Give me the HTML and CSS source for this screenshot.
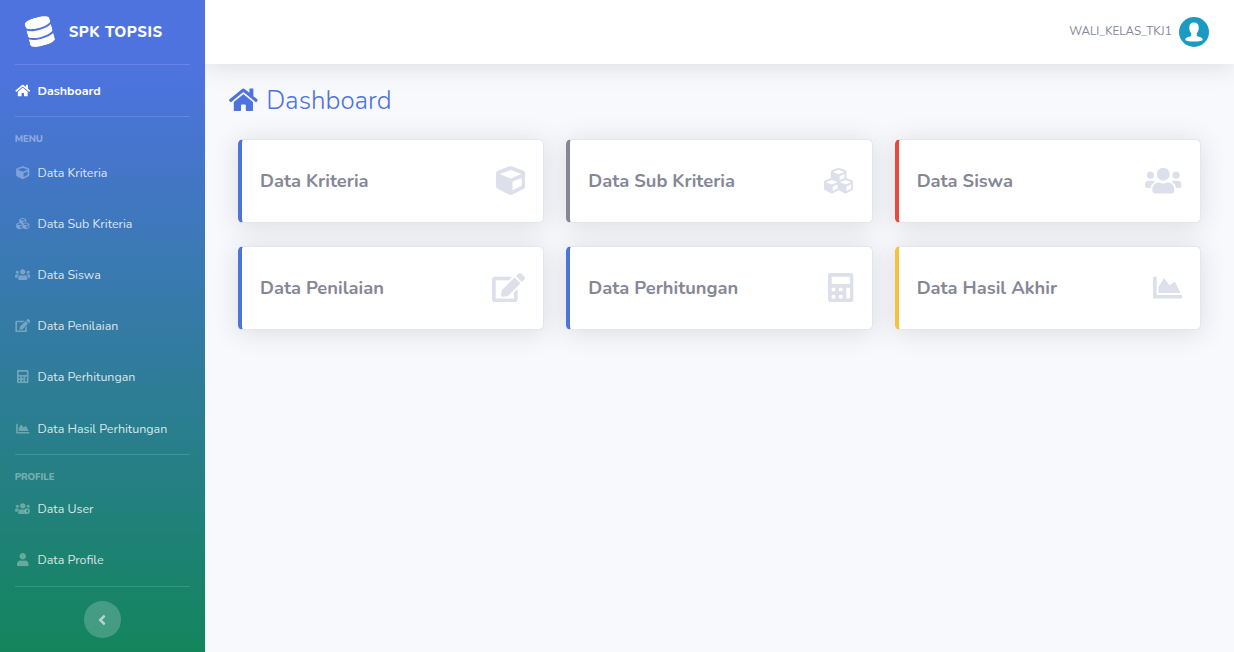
FILE: index.html
```html
<!DOCTYPE html>
<html lang="id">
<head>
<meta charset="utf-8">
<title>SPK TOPSIS - Dashboard</title>
<link rel="stylesheet" href="styles.css">
</head>
<body>
<svg class="sprite" aria-hidden="true">
  <symbol id="home" viewBox="0 0 576 512"><path d="M280.37 148.26L96 300.11V464a16 16 0 0 0 16 16l112.06-.29a16 16 0 0 0 15.92-16V368a16 16 0 0 1 16-16h64a16 16 0 0 1 16 16v95.64a16 16 0 0 0 16 16.05L464 480a16 16 0 0 0 16-16V300L295.67 148.26a12.19 12.19 0 0 0-15.3 0zM571.6 251.47L488 182.56V44.05a12 12 0 0 0-12-12h-56a12 12 0 0 0-12 12v72.61L318.47 43a48 48 0 0 0-61 0L4.34 251.47a12 12 0 0 0-1.6 16.9l25.5 31A12 12 0 0 0 45.15 301l235.22-193.74a12.19 12.19 0 0 1 15.3 0L530.9 301a12 12 0 0 0 16.9-1.6l25.5-31a12 12 0 0 0-1.7-16.93z"/></symbol>
  <symbol id="database" viewBox="0 0 448 512"><path d="M448 73.143v45.714C448 159.143 347.667 192 224 192S0 159.143 0 118.857V73.143C0 32.857 100.333 0 224 0s224 32.857 224 73.143zM448 176v102.857C448 319.143 347.667 352 224 352S0 319.143 0 278.857V176c48.125 33.143 136.208 48.572 224 48.572S399.874 209.143 448 176zm0 160v102.857C448 479.143 347.667 512 224 512S0 479.143 0 438.857V336c48.125 33.143 136.208 48.572 224 48.572S399.874 369.143 448 336z"/></symbol>
  <symbol id="cube" viewBox="0 0 512 512"><path d="M239.1 6.3l-208 78c-18.7 7-31.1 25-31.1 45v225.1c0 18.2 10.3 34.8 26.5 42.9l208 104c13.5 6.8 29.4 6.8 42.9 0l208-104c16.3-8.1 26.5-24.8 26.5-42.9V129.3c0-20-12.4-37.9-31.1-44.9l-208-78C262 2.2 250 2.2 239.1 6.3zM256 68.4l192 72v1.1l-192 78-192-78v-1.1l192-72zm32 356V275.5l160-65v133.9l-160 80z"/></symbol>
  <symbol id="cubes" viewBox="0 0 512 512"><path d="M488.6 250.2L392 214V105.5c0-15-9.3-28.4-23.4-33.7l-100-37.5c-8.1-3.1-17.1-3.1-25.3 0l-100 37.5c-14.1 5.3-23.4 18.7-23.4 33.7V214l-96.6 36.2C9.3 255.5 0 268.9 0 283.9V394c0 13.6 7.7 26.1 19.9 32.2l100 50c10.1 5.1 22.1 5.1 32.2 0l103.9-52 103.9 52c10.1 5.1 22.1 5.1 32.2 0l100-50c12.2-6.1 19.9-18.6 19.9-32.2V283.9c0-15-9.3-28.4-23.4-33.7zM358 214.8l-85 31.9v-68.2l85-37v73.3zM154 104.1l102-38.2 102 38.2v.6l-102 41.4-102-41.4v-.6zm84 291.1l-85 42.5v-79.1l85-38.8v75.4zm0-112l-102 41.4-102-41.4v-.6l102-38.2 102 38.2v.6zm240 112l-85 42.5v-79.1l85-38.8v75.4zm0-112l-102 41.4-102-41.4v-.6l102-38.2 102 38.2v.6z"/></symbol>
  <symbol id="users" viewBox="0 0 640 512"><path d="M96 224c35.3 0 64-28.7 64-64s-28.7-64-64-64-64 28.7-64 64 28.7 64 64 64zm448 0c35.3 0 64-28.7 64-64s-28.7-64-64-64-64 28.7-64 64 28.7 64 64 64zm32 32h-64c-17.6 0-33.5 7.1-45.1 18.6 40.3 22.1 68.9 62 75.1 109.4h66c17.7 0 32-14.3 32-32v-32c0-35.3-28.7-64-64-64zm-256 0c61.9 0 112-50.1 112-112S381.9 32 320 32 208 82.1 208 144s50.1 112 112 112zm76.8 32h-8.3c-20.8 10-43.9 16-68.5 16s-47.6-6-68.5-16h-8.3C179.6 288 128 339.6 128 403.2V432c0 26.5 21.5 48 48 48h288c26.5 0 48-21.5 48-48v-28.8c0-63.6-51.6-115.2-115.2-115.2zm-223.7-13.4C161.5 263.1 145.6 256 128 256H64c-35.3 0-64 28.7-64 64v32c0 17.7 14.3 32 32 32h65.9c6.3-47.4 34.9-87.3 75.2-109.4z"/></symbol>
  <symbol id="edit" viewBox="0 0 576 512"><path d="M402.6 83.2l90.2 90.2c3.8 3.8 3.8 10 0 13.8L274.4 405.6l-92.8 10.3c-12.4 1.4-22.9-9.1-21.5-21.5l10.3-92.8L388.8 83.2c3.8-3.8 10-3.8 13.8 0zm162-22.9l-48.8-48.8c-15.2-15.2-39.9-15.2-55.2 0l-35.4 35.4c-3.8 3.8-3.8 10 0 13.8l90.2 90.2c3.8 3.8 10 3.8 13.8 0l35.4-35.4c15.2-15.3 15.2-40 0-55.2zM384 346.2V448H64V128h229.8c3.2 0 6.2-1.3 8.5-3.5l40-40c7.6-7.6 2.2-20.5-8.5-20.5H48C21.5 64 0 85.5 0 112v352c0 26.5 21.5 48 48 48h352c26.5 0 48-21.5 48-48V306.2c0-10.7-12.9-16-20.5-8.5l-40 40c-2.2 2.3-3.5 5.3-3.5 8.5z"/></symbol>
  <symbol id="calculator" viewBox="0 0 448 512"><path fill-rule="evenodd" d="M400 0H48C22.4 0 0 22.4 0 48v416c0 25.6 22.4 48 48 48h352c25.6 0 48-22.4 48-48V48c0-25.6-22.4-48-48-48zM77 64h294q13 0 13 13v102q0 13-13 13H77q-13 0-13-13V77q0-13 13-13zM77 256h38q13 0 13 13v38q0 13-13 13H77q-13 0-13-13v-38q0-13 13-13zM205 256h38q13 0 13 13v38q0 13-13 13h-38q-13 0-13-13v-38q0-13 13-13zM77 384h38q13 0 13 13v38q0 13-13 13H77q-13 0-13-13v-38q0-13 13-13zM205 384h38q13 0 13 13v38q0 13-13 13h-38q-13 0-13-13v-38q0-13 13-13zM333 256h38q13 0 13 13v166q0 13-13 13h-38q-13 0-13-13V269q0-13 13-13z"/></symbol>
  <symbol id="chart" viewBox="0 0 512 512"><path d="M500 384c6.6 0 12 5.4 12 12v40c0 6.6-5.4 12-12 12H12c-6.6 0-12-5.4-12-12V76c0-6.6 5.4-12 12-12h40c6.6 0 12 5.4 12 12v308h436zM372.7 159.5L288 216l-85.3-113.7c-5.1-6.8-15.5-6.3-19.9 1L96 248v104h384l-89.9-187.8c-3.2-6.5-11.4-8.7-17.4-4.7z"/></symbol>
  <symbol id="user" viewBox="0 0 448 512"><path d="M224 256c70.7 0 128-57.3 128-128S294.7 0 224 0 96 57.3 96 128s57.3 128 128 128zm89.6 32h-16.7c-22.2 10.2-46.9 16-72.9 16s-50.6-5.8-72.9-16h-16.7C60.2 288 0 348.2 0 422.4V464c0 26.5 21.5 48 48 48h352c26.5 0 48-21.5 48-48v-41.6c0-74.2-60.2-134.4-134.4-134.4z"/></symbol>
  <symbol id="users-cog" viewBox="0 0 640 512">
    <mask id="cog-gap"><path fill="#fff" d="M0 0h640v512H0z"/><circle cx="500" cy="360" r="145"/></mask>
    <g mask="url(#cog-gap)"><path d="M96 224a64 64 0 1 0 0-128 64 64 0 0 0 0 128zM544 224a64 64 0 1 0 0-128 64 64 0 0 0 0 128zM320 256a112 112 0 1 0 0-224 112 112 0 0 0 0 224zM397 288h-8q-69 32-138 0h-8c-63 0-115 52-115 115v29q0 48 48 48h288V288zM173 274.600Q154 256 128 256H64q-64 0-64 64v32q0 32 32 32h66q9-71 75-109.400z"/></g>
    <circle cx="500" cy="360" r="78" fill="none" stroke="currentColor" stroke-width="68"/>
    <circle cx="500" cy="360" r="122" fill="none" stroke="currentColor" stroke-width="24" stroke-dasharray="72.500 55.260" stroke-dashoffset="36"/>
  </symbol>
  <symbol id="angle-left" viewBox="0 0 256 512"><path d="M31.700 239l136-136c9.400-9.400 24.600-9.400 33.900 0l22.600 22.600c9.400 9.400 9.400 24.600 0 33.900L127.900 256l96.400 96.400c9.400 9.400 9.400 24.600 0 33.900L201.700 409c-9.400 9.400-24.600 9.400-33.900 0l-136-136c-9.500-9.400-9.500-24.600-.1-34z"/></symbol>
</svg>

<div class="wrapper">
  <nav class="sidebar">
    <a class="brand"><svg class="brand-icon"><use href="#database"/></svg><span class="brand-text">SPK TOPSIS</span></a>
    <hr class="divider">
    <a class="nav-link active"><svg class="nav-icon"><use href="#home"/></svg><span>Dashboard</span></a>
    <hr class="divider spaced">
    <div class="section-title">MENU</div>
    <a class="nav-link"><svg class="nav-icon"><use href="#cube"/></svg><span>Data Kriteria</span></a>
    <a class="nav-link"><svg class="nav-icon"><use href="#cubes"/></svg><span>Data Sub Kriteria</span></a>
    <a class="nav-link"><svg class="nav-icon"><use href="#users"/></svg><span>Data Siswa</span></a>
    <a class="nav-link"><svg class="nav-icon"><use href="#edit"/></svg><span>Data Penilaian</span></a>
    <a class="nav-link"><svg class="nav-icon"><use href="#calculator"/></svg><span>Data Perhitungan</span></a>
    <a class="nav-link"><svg class="nav-icon"><use href="#chart"/></svg><span>Data Hasil Perhitungan</span></a>
    <hr class="divider spaced">
    <div class="section-title profile">PROFILE</div>
    <a class="nav-link"><svg class="nav-icon"><use href="#users-cog"/></svg><span>Data User</span></a>
    <a class="nav-link"><svg class="nav-icon"><use href="#user"/></svg><span>Data Profile</span></a>
    <hr class="divider spaced">
    <button class="toggle" aria-label="Toggle sidebar"><svg><use href="#angle-left"/></svg></button>
  </nav>

  <div class="content">
    <header class="topbar">
      <span class="username">WALI_KELAS_TKJ1</span>
      <svg class="avatar" viewBox="0 0 60 60"><circle cx="30" cy="30" r="30" fill="#1b9bc2"/><path fill="#fff" d="M30 11c6.500 0 9.500 4 9.500 10 0 5-1.500 9-4 11.500v4.500c1 3 12 2.500 12 8.500 0 2.500-8 3.500-17.500 3.500s-17.500-1-17.500-3.500c0-6 11-5.500 12-8.500v-4.500c-2.500-2.500-4-6.500-4-11.500 0-6 3-10 9.500-10z"/></svg>
    </header>
    <main class="page">
      <h1 class="title"><svg><use href="#home"/></svg><span>Dashboard</span></h1>
      <div class="cards">
        <a class="card primary"><span>Data Kriteria</span><svg class="w-512"><use href="#cube"/></svg></a>
        <a class="card secondary"><span>Data Sub Kriteria</span><svg class="w-512"><use href="#cubes"/></svg></a>
        <a class="card danger"><span>Data Siswa</span><svg class="w-640"><use href="#users"/></svg></a>
        <a class="card primary"><span>Data Penilaian</span><svg class="w-576"><use href="#edit"/></svg></a>
        <a class="card primary"><span>Data Perhitungan</span><svg class="w-448"><use href="#calculator"/></svg></a>
        <a class="card warning"><span>Data Hasil Akhir</span><svg class="w-512"><use href="#chart"/></svg></a>
      </div>
    </main>
  </div>
</div>
</body>
</html>
```
FILE: styles.css
```css
html { font-size: 14.64px; }
* { box-sizing: border-box; }
body {
  margin: 0;
  font-family: Nunito, Lato, "Open Sans", sans-serif;
  line-height: 1.5;
  color: #858796;
  background: #f8f9fc;
}
svg { fill: currentColor; display: block; flex: none; }
.sprite { position: absolute; width: 0; height: 0; }
.wrapper { display: flex; height: 652px; overflow: hidden; }

.sidebar {
  width: 14rem;
  flex: none;
  background: linear-gradient(180deg, #4e73df 10%, #13855c 100%);
}
.brand {
  display: flex;
  align-items: center;
  justify-content: center;
  height: 64px;
  padding: 0 15px 1px 0;
  color: #fff;
}
.brand-icon { width: 1.75rem; height: 2rem; transform: rotate(-15deg); }
.brand-text {
  margin: 1px 0 0 1.08rem;
  font-size: 1.03rem;
  font-weight: 800;
  letter-spacing: .035rem;
}
.divider {
  margin: 0 1rem;
  border: 0;
  border-top: 1px solid rgba(255, 255, 255, .15);
}
.divider.spaced { margin-bottom: 1rem; }
.section-title {
  padding: 0 1rem;
  font-size: .65rem;
  line-height: 1rem;
  font-weight: 800;
  color: rgba(255, 255, 255, .4);
}
.section-title.profile { margin: 0 0 -1px; }
.nav-link {
  display: flex;
  align-items: center;
  gap: .5rem;
  height: 3.5rem;
  padding: 0 1rem;
  font-size: .85rem;
  color: rgba(255, 255, 255, .84);
}
.nav-link span { padding-top: 1.5px; }
.nav-icon { width: 1.06rem; height: .9rem; color: rgba(255, 255, 255, .32); }
.nav-link.active { font-weight: 700; color: #fff; }
.active .nav-icon { color: #fff; }
.toggle {
  display: flex;
  align-items: center;
  justify-content: center;
  width: 2.5rem;
  height: 2.5rem;
  margin: 0 auto;
  padding: 0;
  border: 0;
  border-radius: 50%;
  color: rgba(255, 255, 255, .6);
  background: rgba(255, 255, 255, .2);
}
.toggle svg { width: .55rem; height: 1.1rem; }

.content { flex: 1; min-width: 0; overflow: hidden; }
.topbar {
  display: flex;
  align-items: center;
  justify-content: flex-end;
  gap: .5rem;
  height: 64px;
  padding-right: 25px;
  background: #fff;
  box-shadow: 0 .15rem 1.75rem 0 rgba(58, 59, 69, .15);
}
.username { font-size: .8rem; }
.avatar { width: 30px; height: 30px; }
.page { padding: 1.5rem 33px 0; }
.title {
  display: flex;
  align-items: center;
  gap: .57rem;
  height: 31px;
  margin: -1px 0 23px -9px;
  font-size: 1.77rem;
  font-weight: 300;
  line-height: 1.2;
  color: #4e73df;
}
.title span { padding-top: 1px; }
.title svg { width: 1.97rem; height: 1.75rem; margin-bottom: 2px; }
.cards {
  display: grid;
  grid-template-columns: repeat(3, 1fr);
  gap: 22.5px 22px;
}
.card {
  display: flex;
  align-items: center;
  justify-content: space-between;
  height: 84.5px;
  padding: 0 18px 1.5px;
  border: 1px solid #e3e6f0;
  border-left: 4px solid;
  border-radius: .35rem;
  background: #fff;
  box-shadow: 0 .15rem 1.75rem 0 rgba(58, 59, 69, .15);
}
.card span { font-size: 1.25rem; font-weight: 700; color: #858796; }
.card svg { height: 2rem; color: #dddfeb; }
.w-448 { width: 1.75rem; }
.w-512 { width: 2rem; }
.w-576 { width: 2.25rem; }
.w-640 { width: 2.5rem; }
.card.primary { border-left-color: #4e73df; }
.card.secondary { border-left-color: #858796; }
.card.danger { border-left-color: #e74a3b; }
.card.warning { border-left-color: #f6c23e; }
```
